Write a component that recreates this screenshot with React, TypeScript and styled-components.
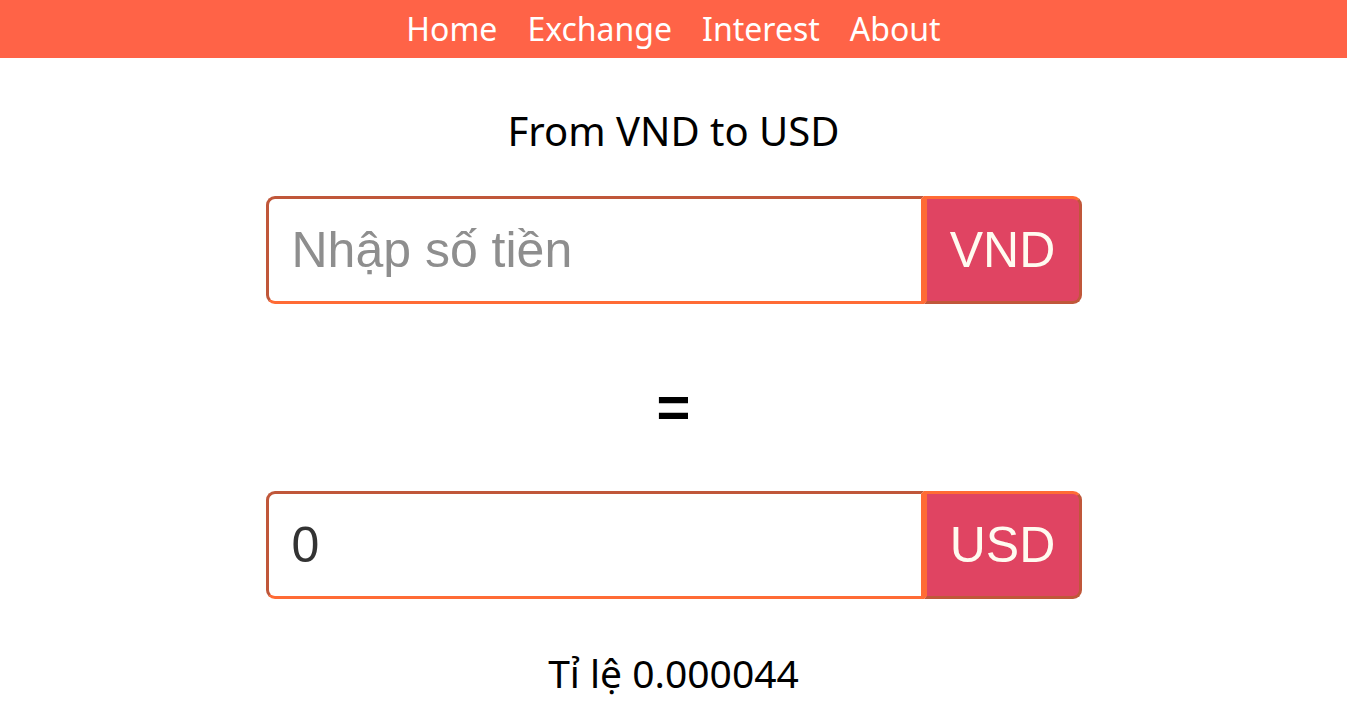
import React from "react";
import styled, { createGlobalStyle } from "styled-components";

const Global = createGlobalStyle`
  html, body { margin: 0; padding: 0; background: #ffffff; }
  body { font-family: "Noto Sans", "Open Sans", sans-serif; }
`;

const NavBar = styled.nav`
  height: 58px;
  background: #ff6347;
  display: flex;
  justify-content: center;
  align-items: center;
  gap: 30px;
`;

const NavLink = styled.a`
  color: #ffffff;
  font-family: "Noto Sans", sans-serif;
  font-size: 32px;
  text-decoration: none;
  line-height: 58px;
`;

const Main = styled.main`
  display: flex;
  flex-direction: column;
  align-items: center;
`;

const Title = styled.h2`
  margin: 48px 0 0;
  font-family: "Noto Sans", sans-serif;
  font-weight: 400;
  font-size: 40px;
  line-height: 50px;
  color: #000;
`;

const Group = styled.div<{ $top: number }>`
  margin-top: ${(p) => p.$top}px;
  width: 816px;
  height: 108px;
  display: flex;
`;

const Field = styled.input`
  flex: 1;
  min-width: 0;
  box-sizing: border-box;
  height: 100%;
  border-style: solid;
  border-width: 3px;
  border-color: #c0573a #ff6b35 #ff6b35 #c0573a;
  border-radius: 9px 0 0 9px;
  padding: 0 0 0 23px;
  font-family: "Liberation Sans", Arial, sans-serif;
  font-size: 50px;
  color: #333333;
  outline: none;
  background: #fff;
  &::placeholder { color: #8e8e8e; }
`;

const Addon = styled.span`
  box-sizing: border-box;
  width: 158px;
  height: 100%;
  display: flex;
  align-items: center;
  justify-content: center;
  background: #e04462;
  border-style: solid;
  border-width: 3px;
  border-color: #ff6b35 #c0573a #c0573a #ff6b35;
  border-radius: 0 9px 9px 0;
  color: #fffbf0;
  font-family: "Liberation Sans", Arial, sans-serif;
  font-size: 50px;
`;

const Equals = styled.div`
  margin-top: 78px;
  font-family: "Liberation Sans", Arial, sans-serif;
  font-weight: 700;
  font-size: 58px;
  line-height: 50px;
  color: #000;
`;

const Rate = styled.p`
  margin: 49px 0 0;
  font-family: "Noto Sans", sans-serif;
  font-size: 39px;
  line-height: 50px;
  color: #000;
`;

export default function App() {
  return (
    <>
      <Global />
      <NavBar>
        <NavLink href="#">Home</NavLink>
        <NavLink href="#">Exchange</NavLink>
        <NavLink href="#">Interest</NavLink>
        <NavLink href="#">About</NavLink>
      </NavBar>
      <Main>
        <Title>From VND to USD</Title>
        <Group $top={40}>
          <Field placeholder="Nhập số tiền" />
          <Addon>VND</Addon>
        </Group>
        <Equals>=</Equals>
        <Group $top={59}>
          <Field value="0" readOnly />
          <Addon>USD</Addon>
        </Group>
        <Rate>Tỉ lệ 0.000044</Rate>
      </Main>
    </>
  );
}
